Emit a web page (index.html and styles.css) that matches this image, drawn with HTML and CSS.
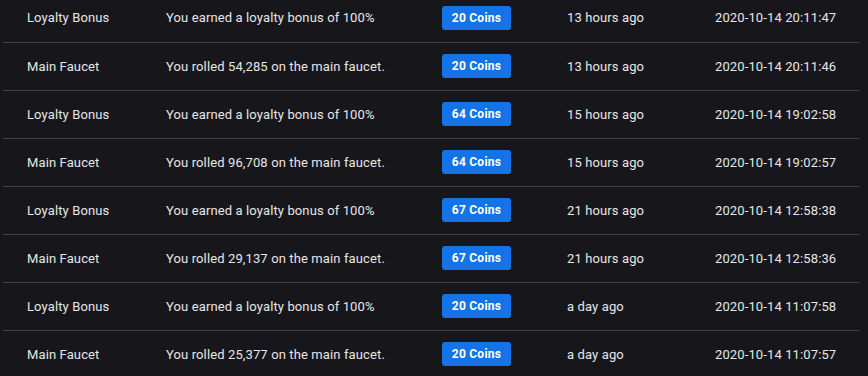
FILE: index.html
```html
<!DOCTYPE html>
<html lang="en">

<head>
    <meta charset="UTF-8">
    <meta name="viewport" content="width=device-width, initial-scale=1.0">
    <title>History</title>
    <link rel="stylesheet" href="styles.css">
</head>

<body>
    <div class="history">
        <table>
            <tr>
                <td>Loyalty Bonus</td>
                <td>You earned a loyalty bonus of 100%</td>
                <td><span class="coins">20 Coins</span></td>
                <td>13 hours ago</td>
                <td>2020-10-14 20:11:47</td>
            </tr>
            <tr>
                <td>Main Faucet</td>
                <td>You rolled 54,285 on the main faucet.</td>
                <td><span class="coins">20 Coins</span></td>
                <td>13 hours ago</td>
                <td>2020-10-14 20:11:46</td>
            </tr>
            <tr>
                <td>Loyalty Bonus</td>
                <td>You earned a loyalty bonus of 100%</td>
                <td><span class="coins">64 Coins</span></td>
                <td>15 hours ago</td>
                <td>2020-10-14 19:02:58</td>
            </tr>
            <tr>
                <td>Main Faucet</td>
                <td>You rolled 96,708 on the main faucet.</td>
                <td><span class="coins">64 Coins</span></td>
                <td>15 hours ago</td>
                <td>2020-10-14 19:02:57</td>
            </tr>
            <tr>
                <td>Loyalty Bonus</td>
                <td>You earned a loyalty bonus of 100%</td>
                <td><span class="coins">67 Coins</span></td>
                <td>21 hours ago</td>
                <td>2020-10-14 12:58:38</td>
            </tr>
            <tr>
                <td>Main Faucet</td>
                <td>You rolled 29,137 on the main faucet.</td>
                <td><span class="coins">67 Coins</span></td>
                <td>21 hours ago</td>
                <td>2020-10-14 12:58:36</td>
            </tr>
            <tr>
                <td>Loyalty Bonus</td>
                <td>You earned a loyalty bonus of 100%</td>
                <td><span class="coins">20 Coins</span></td>
                <td>a day ago</td>
                <td>2020-10-14 11:07:58</td>
            </tr>
            <tr>
                <td>Main Faucet</td>
                <td>You rolled 25,377 on the main faucet.</td>
                <td><span class="coins">20 Coins</span></td>
                <td>a day ago</td>
                <td>2020-10-14 11:07:57</td>
            </tr>
        </table>
    </div>
</body>

</html>
```

FILE: styles.css
```css
* {
    padding: 0;
    margin: 0;
    box-sizing: border-box;
}

body {
    background-color: #17171b;
    color: #e6e6e6;
    font-family: Roboto, "Liberation Sans", sans-serif;
    font-size: 13px;
    letter-spacing: 0.12px;
    overflow: hidden;
}

.history {
    padding: 0 8px 0 3px;
    margin-top: -6px;
}

table {
    width: 857px;
    border-collapse: collapse;
    table-layout: fixed;
}

tr {
    height: 48px;
    border-bottom: 1px solid #3d3b5c;
}

tr:last-child {
    border-bottom: none;
}

td {
    padding: 0 0 0 24px;
    vertical-align: middle;
    white-space: nowrap;
}

td:nth-child(1) {
    width: 139px;
}

td:nth-child(2) {
    width: 276px;
}

td:nth-child(3) {
    width: 125px;
}

td:nth-child(4) {
    width: 148px;
}

.coins {
    display: inline-block;
    width: 69px;
    height: 24px;
    line-height: 24px;
    text-align: center;
    background-color: #1473e6;
    color: #fff;
    font-weight: bold;
    font-size: 12px;
    letter-spacing: 0.25px;
    border-radius: 3px;
}
```
